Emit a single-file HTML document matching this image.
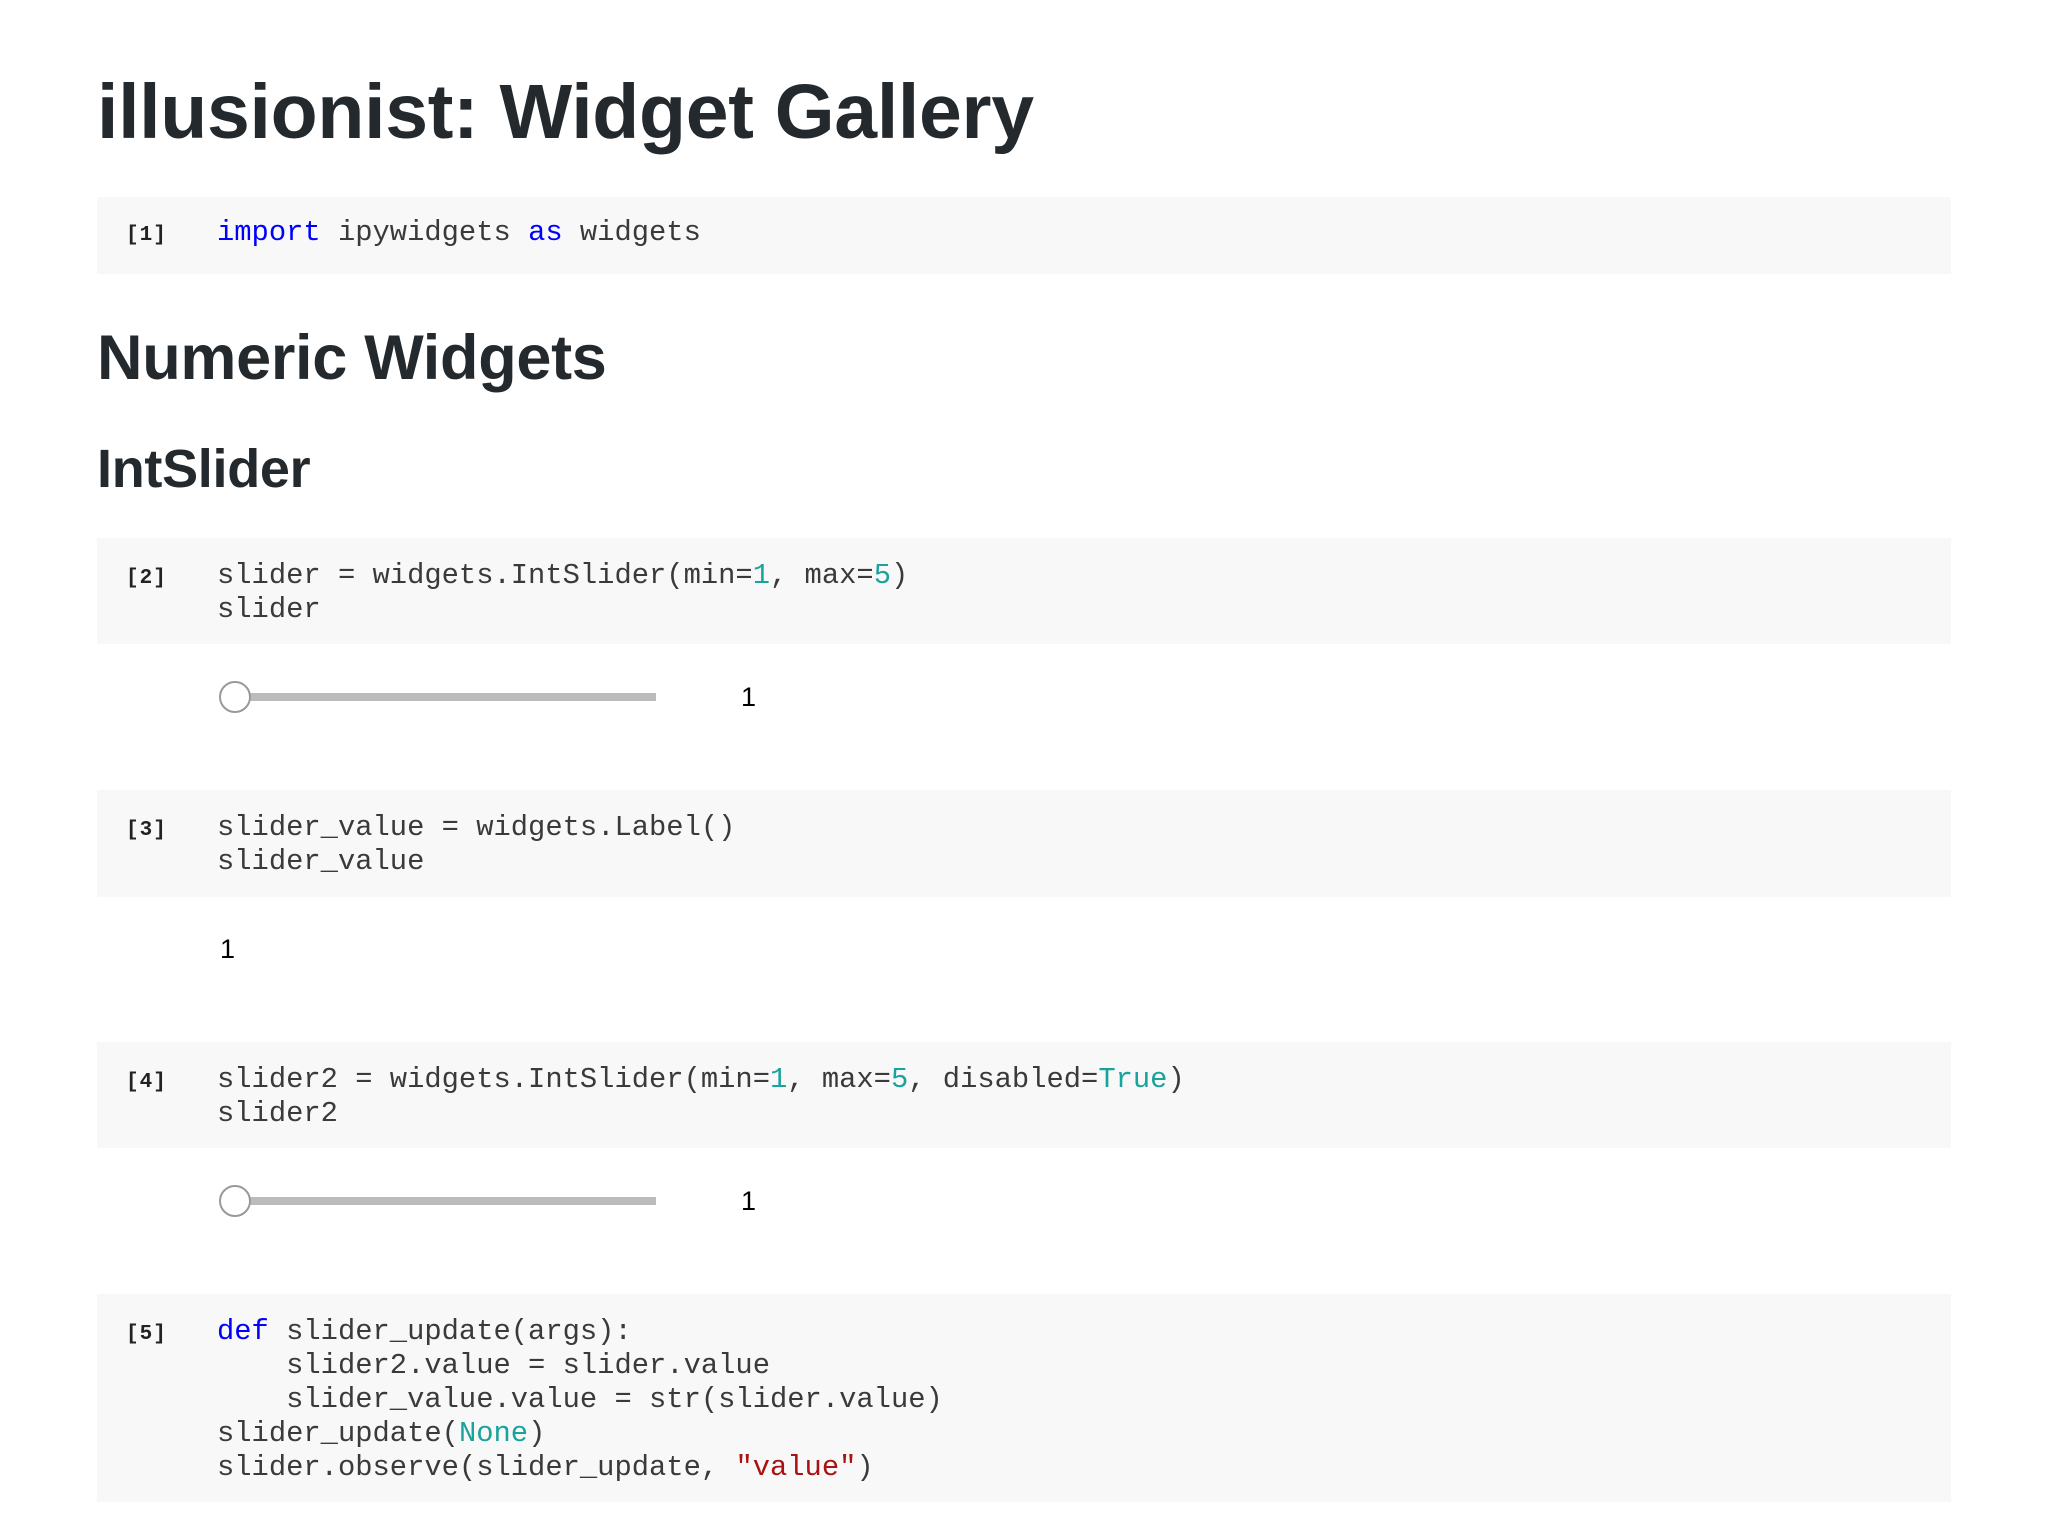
<!DOCTYPE html>
<html><head><meta charset="utf-8"><style>
body{margin:0;width:2048px;height:1536px;background:#fff;position:relative;overflow:hidden;font-family:"Liberation Sans",sans-serif;color:#24292e}
.h{position:absolute;left:97px;font-weight:bold;line-height:1;white-space:nowrap;letter-spacing:-0.3px}
.cell{position:absolute;left:97px;width:1854px;background:#f8f8f8}
.l{position:absolute;left:217px;font-family:"Liberation Mono",monospace;font-size:28.8px;line-height:34px;color:#3a3a3a;white-space:pre}
.p{position:absolute;left:126px;font-family:"Liberation Mono",monospace;font-size:21px;font-weight:bold;letter-spacing:1px;color:#222;white-space:pre}
.k{color:#00f}.n{color:#1aa39c}.s{color:#a11}
.track{position:absolute;left:235px;width:421px;height:8px;background:#bbb}
.knob{position:absolute;width:32px;height:32px;border:2px solid #999;border-radius:50%;background:#fff;box-sizing:border-box}
.v{position:absolute;font-size:27px;line-height:1;color:#000}
</style></head><body>
<div class="h" style="top:74px;font-size:77px">illusionist: Widget Gallery</div>
<div class="cell" style="top:197px;height:77px"></div>
<div class="p" style="top:224px">[1]</div>
<div class="l" style="top:216px"><span class="k">import</span> ipywidgets <span class="k">as</span> widgets</div>

<div class="h" style="top:327px;font-size:63px">Numeric Widgets</div>
<div class="h" style="top:442px;font-size:54px">IntSlider</div>

<div class="cell" style="top:538px;height:106px"></div>
<div class="p" style="top:567px">[2]</div>
<div class="l" style="top:559px">slider = widgets.IntSlider(min=<span class="n">1</span>, max=<span class="n">5</span>)</div>
<div class="l" style="top:593px">slider</div>
<div class="track" style="top:693px"></div>
<div class="knob" style="left:219px;top:681px"></div>
<div class="v" style="left:741px;top:684px">1</div>

<div class="cell" style="top:790px;height:107px"></div>
<div class="p" style="top:819px">[3]</div>
<div class="l" style="top:811px">slider_value = widgets.Label()</div>
<div class="l" style="top:845px">slider_value</div>
<div class="v" style="left:220px;top:936px">1</div>

<div class="cell" style="top:1042px;height:106px"></div>
<div class="p" style="top:1071px">[4]</div>
<div class="l" style="top:1063px">slider2 = widgets.IntSlider(min=<span class="n">1</span>, max=<span class="n">5</span>, disabled=<span class="n">True</span>)</div>
<div class="l" style="top:1097px">slider2</div>
<div class="track" style="top:1197px"></div>
<div class="knob" style="left:219px;top:1185px"></div>
<div class="v" style="left:741px;top:1188px">1</div>

<div class="cell" style="top:1294px;height:208px"></div>
<div class="p" style="top:1323px">[5]</div>
<div class="l" style="top:1315px"><span class="k">def</span> slider_update(args):</div>
<div class="l" style="top:1349px">    slider2.value = slider.value</div>
<div class="l" style="top:1383px">    slider_value.value = str(slider.value)</div>
<div class="l" style="top:1417px">slider_update(<span class="n">None</span>)</div>
<div class="l" style="top:1451px">slider.observe(slider_update, <span class="s">"value"</span>)</div>
</body></html>
